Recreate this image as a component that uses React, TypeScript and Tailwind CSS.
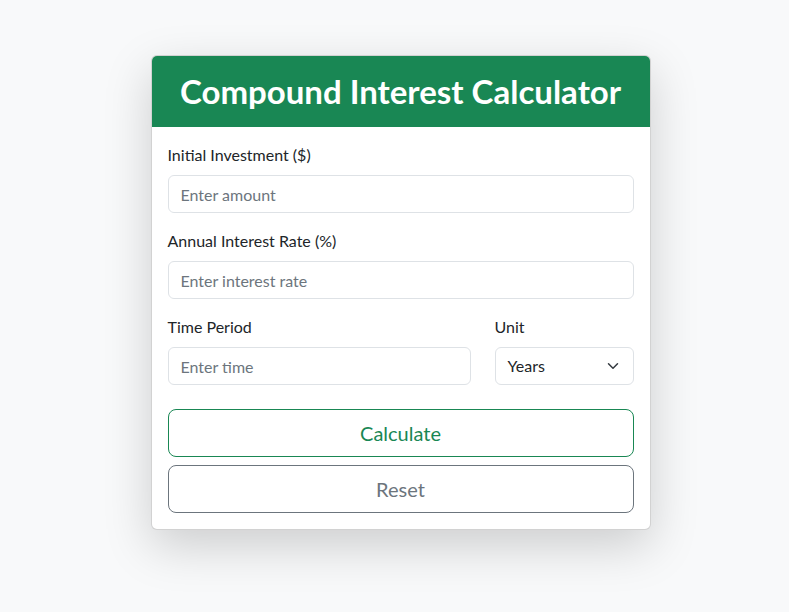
import React from "react";

export default function App() {
  const font = { fontFamily: 'Lato, "Open Sans", sans-serif' };
  return (
    <div className="min-h-[612px] w-full bg-[#f8f9fa] text-[#212529]" style={font}>
      <div className="flex justify-center pl-[12px] pt-[55px]">
        <div className="w-[500px] overflow-hidden rounded-[6px] border border-[rgba(0,0,0,0.175)] bg-white shadow-[0_16px_48px_rgba(0,0,0,0.175)]">
          <div className="bg-[#198754] px-4 py-4 text-center">
            <h1 className="text-[33px] font-bold leading-[39px] text-white">Compound Interest Calculator</h1>
          </div>
          <div className="px-4 pb-4 pt-[16px]">
            <div className="mb-4">
              <label className="mb-2 block text-[16px] leading-[24px]">Initial Investment ($)</label>
              <input
                className="block h-[38px] w-full rounded-[6px] border border-[#dee2e6] px-3 text-[16px] placeholder:text-[#6c757d] outline-none"
                placeholder="Enter amount"
              />
            </div>
            <div className="mb-4">
              <label className="mb-2 block text-[16px] leading-[24px]">Annual Interest Rate (%)</label>
              <input
                className="block h-[38px] w-full rounded-[6px] border border-[#dee2e6] px-3 text-[16px] placeholder:text-[#6c757d] outline-none"
                placeholder="Enter interest rate"
              />
            </div>
            <div className="mb-6 flex gap-6">
              <div className="flex-1">
                <label className="mb-2 block text-[16px] leading-[24px]">Time Period</label>
                <input
                  className="block h-[38px] w-full rounded-[6px] border border-[#dee2e6] px-3 text-[16px] placeholder:text-[#6c757d] outline-none"
                  placeholder="Enter time"
                />
              </div>
              <div className="w-[139px]">
                <label className="mb-2 block text-[16px] leading-[24px]">Unit</label>
                <div className="flex h-[38px] w-full items-center justify-between rounded-[6px] border border-[#dee2e6] pl-3 pr-[14px] text-[16px]">
                  <span>Years</span>
                  <svg width="12" height="12" viewBox="0 0 16 16" fill="none" stroke="#343a40" strokeWidth="2" strokeLinecap="round" strokeLinejoin="round">
                    <path d="m2 5 6 6 6-6" />
                  </svg>
                </div>
              </div>
            </div>
            <div className="flex flex-col gap-2">
              <button className="h-[48px] w-full rounded-[8px] border border-[#198754] text-[20px] text-[#198754]">Calculate</button>
              <button className="h-[48px] w-full rounded-[8px] border border-[#6c757d] text-[20px] text-[#6c757d]">Reset</button>
            </div>
          </div>
        </div>
      </div>
    </div>
  );
}
